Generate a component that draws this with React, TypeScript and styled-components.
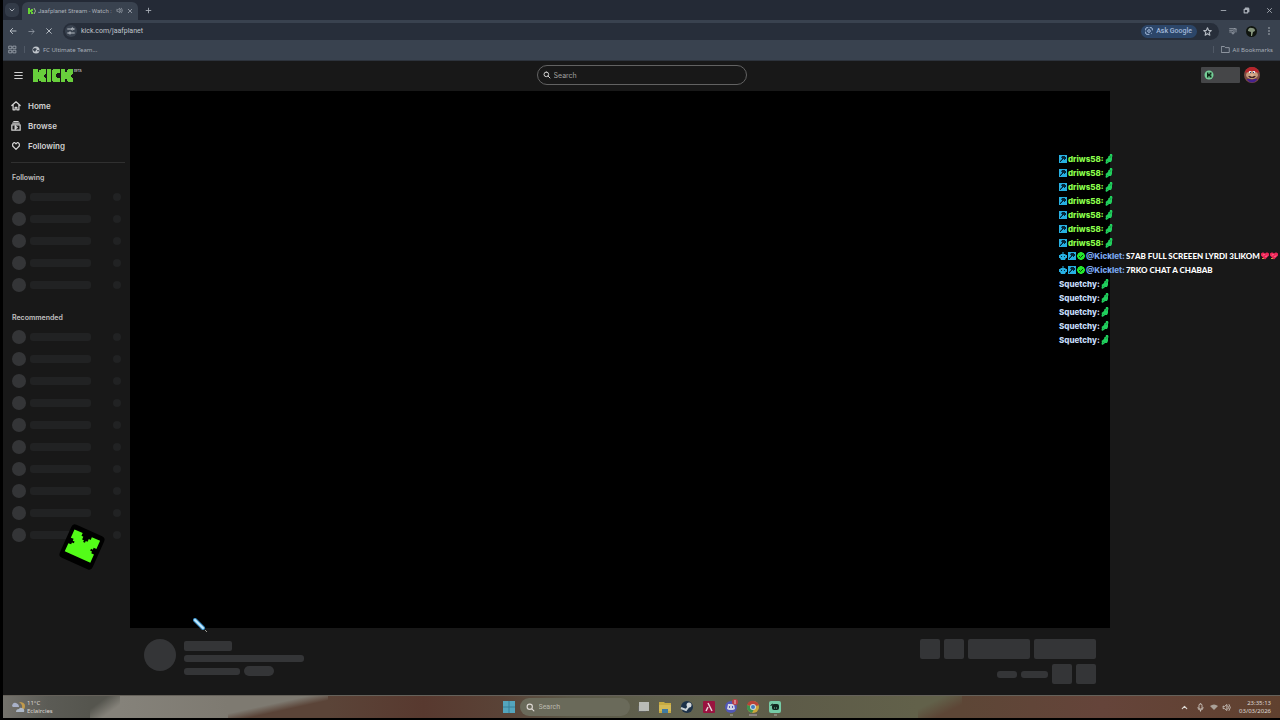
import React from "react";
import styled, { createGlobalStyle } from "styled-components";

const GlobalStyle = createGlobalStyle`
  * { box-sizing: border-box; }
  body { margin: 0; background: #000; font-family: Inter, "Liberation Sans", sans-serif; }
  button, input { font: inherit; border: 0; margin: 0; padding: 0; background: none; color: inherit; outline: none; }
  button { display: flex; align-items: center; justify-content: center; }
  a { color: inherit; text-decoration: none; }
  svg { display: block; flex: none; }
`;

const Screen = styled.div`
  position: relative;
  display: flex;
  flex-direction: column;
  min-height: 100vh;
  padding: 0 0 2px 3px;
  overflow: hidden;
  background: #000;
`;

/* ---------- browser ---------- */

const TabStrip = styled.header`
  display: flex;
  align-items: center;
  height: 20px;
  padding: 0 5px 0 2px;
  background: #242a36;
  color: #a9afb8;
`;

const TabSearchButton = styled.button`
  width: 14px;
  height: 14px;
  border-radius: 5px;
  background: #333b48;
`;

const Tab = styled.div`
  display: flex;
  align-items: center;
  gap: 2px;
  align-self: flex-end;
  width: 116px;
  height: 18px;
  margin-left: 3px;
  padding: 0 4px 1px 6px;
  border-radius: 6px 6px 0 0;
  background: #39424f;
  font-size: 6px;
`;

const TabTitle = styled.span`
  flex: 1;
  white-space: nowrap;
  font-family: Roboto, sans-serif;
`;

const IconButton = styled.button<{ $size?: number }>`
  width: ${(p) => p.$size ?? 12}px;
  height: ${(p) => p.$size ?? 12}px;
  flex: none;
`;

const NewTab = styled(IconButton)`
  margin-left: 4px;
`;

const WindowControls = styled.div`
  display: flex;
  gap: 11px;
  margin-left: auto;
`;

const Toolbar = styled.div`
  display: flex;
  align-items: center;
  height: 22px;
  padding: 0 5px 0 4px;
  gap: 6px;
  background: #39424f;
  color: #b4bac2;
`;

const AddressBar = styled.label`
  display: flex;
  flex: 1;
  align-items: center;
  gap: 4px;
  height: 17px;
  margin-left: 2px;
  padding: 0 6px 0 2px;
  border-radius: 9px;
  background: #272e3a;
`;

const SiteInfo = styled.span`
  display: grid;
  place-items: center;
  width: 12px;
  height: 12px;
  border-radius: 6px;
  background: #39424f;
`;

const AddressInput = styled.input`
  flex: 1;
  min-width: 0;
  font-family: Roboto, sans-serif;
  font-size: 7px;
  color: #c0c5cc;
`;

const AskButton = styled.button`
  gap: 3px;
  height: 13px;
  padding: 0 5px 0 4px;
  border-radius: 7px;
  background: #2c4669;
  color: #a3b9da;
  font: 500 7px Roboto, sans-serif;
`;

const ToolbarEnd = styled.div`
  display: flex;
  gap: 6px;
  margin-left: 2px;
`;

const Bookmarks = styled.nav`
  display: flex;
  align-items: center;
  gap: 7px;
  height: 19px;
  padding: 0 7px 3px 4px;
  border-bottom: 1px solid #2d333c;
  background: #39424f;
  color: #a8afb8;
  font: 6px "Noto Sans", sans-serif;
`;

const Bookmark = styled.a`
  display: flex;
  align-items: center;
  gap: 3px;
`;

const Divider = styled.i<{ $push?: boolean }>`
  width: 1px;
  height: 7px;
  margin-left: ${(p) => (p.$push ? "auto" : 0)};
  background: #505966;
`;

/* ---------- site ---------- */

const SiteHeader = styled.header`
  display: grid;
  grid-template-columns: 1fr 210px 1fr;
  align-items: center;
  height: 30px;
  padding-bottom: 2px;
  background: #181818;
  color: #d0d0d0;
`;

const Brand = styled.div`
  display: flex;
  align-items: center;
  gap: 9px;
  padding-left: 9px;
`;

const SearchBox = styled.label`
  display: flex;
  align-items: center;
  gap: 3px;
  height: 20px;
  padding: 0 5px;
  border: 1px solid #626262;
  border-radius: 10px;
`;

const SearchInput = styled.input`
  flex: 1;
  min-width: 0;
  font-size: 7px;
  &::placeholder { color: #a0a0a0; opacity: 1; }
`;

const Account = styled.div`
  display: flex;
  justify-content: flex-end;
  align-items: center;
  gap: 4px;
  padding-right: 20px;
`;

const Wallet = styled.button`
  justify-content: flex-start;
  width: 39px;
  height: 16px;
  padding: 0 3px;
  border-radius: 1px;
  background: #454648;
`;

const Body = styled.div`
  display: flex;
  flex: 1;
  background: #181818;
`;

const Sidebar = styled.aside`
  width: 127px;
  padding: 5px 5px 0 8px;
  color: #d2d2d2;
`;

const NavLink = styled.a`
  display: flex;
  align-items: center;
  gap: 7px;
  height: 20px;
  font-size: 8px;
  font-weight: 600;
`;

const NavGroup = styled.nav`
  padding-bottom: 6px;
  border-bottom: 1px solid #303030;
`;

const SectionTitle = styled.h2`
  margin: 0;
  height: 10px;
  font-size: 7px;
  line-height: 10px;
  font-weight: 600;
  color: #c0c0c0;
`;

const Section = styled.section`
  padding: 10px 0 7px 1px;
  ul { margin: 3px 0 0; padding: 0; list-style: none; }
`;

const ChannelRow = styled.li`
  display: flex;
  align-items: center;
  height: 22px;
`;

const Bone = styled.span<{ $w: number; $h: number; $r?: number; $dim?: boolean }>`
  flex: none;
  width: ${(p) => p.$w}px;
  height: ${(p) => p.$h}px;
  border-radius: ${(p) => p.$r ?? 2}px;
  background: ${(p) => (p.$dim ? "#212223" : "#343537")};
`;

const ChannelName = styled.span`
  width: 61px;
  height: 8px;
  margin: 0 22px 0 4px;
  border-radius: 3px;
  background: #212223;
`;

const Main = styled.main`
  display: flex;
  flex: 1;
  flex-direction: column;
`;

const Player = styled.div`
  flex: 1;
  background: #000;
`;

const Info = styled.div`
  display: flex;
  align-items: flex-start;
  gap: 8px;
  height: 67px;
  padding: 11px 14px;
`;

const Stack = styled.div<{ $gap: number; $end?: boolean }>`
  display: flex;
  flex-direction: column;
  gap: ${(p) => p.$gap}px;
  align-items: ${(p) => (p.$end ? "flex-end" : "flex-start")};
  ${(p) => (p.$end ? "margin-left: auto;" : "padding-top: 2px;")}
`;

const Line = styled.div`
  display: flex;
  align-items: center;
  gap: 4px;
`;

const ChatColumn = styled.aside`
  width: 170px;
`;

/* ---------- overlays ---------- */

const ChatOverlay = styled.ul`
  position: absolute;
  top: 152px;
  left: calc(100% - 221px);
  margin: 0;
  padding: 0;
  list-style: none;
`;

const Message = styled.li`
  display: flex;
  align-items: center;
  gap: 1px;
  height: 14px;
  white-space: nowrap;
  font-size: 8px;
  font-weight: 800;
  color: #fff;
  &:nth-child(7n) { height: 13px; }
`;

const User = styled.span<{ $color: string }>`
  color: ${(p) => p.$color};
`;

const MessageText = styled.span`
  font-family: Lato, sans-serif;
  font-weight: 900;
`;

const Floating = styled.div<{ $x: number; $bottom: number }>`
  position: absolute;
  left: ${(p) => p.$x}px;
  bottom: ${(p) => p.$bottom}px;
`;

/* ---------- taskbar ---------- */

const Taskbar = styled.footer`
  display: grid;
  grid-template-columns: 1fr auto 1fr;
  align-items: center;
  height: 23px;
  padding: 0 9px;
  border-top: 1px solid #65615a;
  background:
    linear-gradient(to bottom right, #55554e 30%, #85827a 70%) 87px 0 / 30px 100% no-repeat,
    linear-gradient(to bottom right, #7e7a71 40%, #5b4438 60%) 225px 0 / 100px 100% no-repeat,
    linear-gradient(to bottom right, #62614a 30%, #5d4636 70%) 915px 0 / 44px 100% no-repeat,
    linear-gradient(90deg, #74726c 0, #5b5b55 45px, #55554e 87px, #55554e 117px, #85827a 117px, #7e7a71 225px, #7e7a71 325px, #5b4438 325px, #58392f 420px, #5a4337 500px, #5c5a49 570px, #62634f 700px, #5d5b48 780px, #62614a 915px, #62614a 958px, #5d4636 959px, #65443a 1100px, #60412f 1277px);
  color: #ded9d4;
  font: 6px "Noto Sans", sans-serif;
`;

const Weather = styled.div`
  display: flex;
  align-items: center;
  gap: 2px;
  line-height: 8px;
`;

const Apps = styled.div`
  display: flex;
  align-items: center;
  gap: 8px;
`;

const AppButton = styled.button`
  width: 14px;
  height: 20px;
`;

const TaskSearch = styled.label`
  display: flex;
  align-items: center;
  gap: 4px;
  width: 110px;
  height: 18px;
  margin: 0 -2px 0 -4px;
  padding: 0 6px;
  border-radius: 9px;
  background: #6a6a5a;
  font: 7px Roboto, sans-serif;
  input { width: 70px; }
  input::placeholder { color: #bab9ae; opacity: 1; }
`;

const Tray = styled.div`
  display: flex;
  justify-content: flex-end;
  align-items: center;
  gap: 4px;
`;

const Clock = styled.time`
  margin-left: 4px;
  text-align: right;
  line-height: 8px;
`;

/* ---------- drawings ---------- */

type LineIconProps = { d: string; size?: number; width?: number };
const LineIcon = ({ d, size = 10, width = 2 }: LineIconProps) => (
  <svg width={size} height={size} viewBox="0 0 24 24" fill="none" stroke="currentColor" strokeWidth={width} strokeLinejoin="round" strokeLinecap="round">
    <path d={d} />
  </svg>
);

const paths = {
  chevronDown: "M6 9l6 6 6-6",
  chevronUp: "M6 15l6-6 6 6",
  close: "M5 5l14 14M19 5L5 19",
  plus: "M12 4v16M4 12h16",
  minus: "M4 12h16",
  restore: "M4 8h12v12H4zM8 4h9a3 3 0 0 1 3 3v9",
  back: "M21 12H4M11 4l-8 8 8 8",
  forward: "M3 12h17M13 4l8 8-8 8",
  tune: "M2 6h9M2 18h3M14 18h8M19 6h3M16 3a3 3 0 1 1 0 6 3 3 0 0 1 0-6M9 15a3 3 0 1 1 0 6 3 3 0 0 1 0-6",
  star: "M12 2l3 7 7 .6-5.400 4.800L18.300 22 12 17.800 5.700 22l1.700-7.600L2 9.600 9 9z",
  music: "M2 5h11M2 10h9M2 15h6M15 17V4l6 2M12 15a3 3 0 1 0 3 3M21 6v9",
  apps: "M3 3h7v7H3zM14 3h7v7h-7zM3 14h7v7H3zM14 14h7v7h-7z",
  folder: "M2 4h7l3 3h10v13H2z",
  menu: "M2 4h20M2 12h20M2 20h20",
  home: "M2 11L12 2l10 9M5 9v12h5v-6h4v6h5V9",
  browse: "M2 9h20v13H2zM4 5h16M7 1h10M10 12l5 3.500-5 3.500z",
  heart: "M12 20L4 12V7l3-3h2l3 3 3-3h2l3 3v5z",
  search: "M10 3a7 7 0 1 1 0 14 7 7 0 0 1 0-14M15 15l6 6",
  lens: "M9 2H6a4 4 0 0 0-4 4v3M15 2h3a4 4 0 0 1 4 4v3M2 15v3a4 4 0 0 0 4 4h6M12 8a4 4 0 1 1 0 8 4 4 0 0 1 0-8M19 19h.1",
  mic: "M12 2a4 4 0 0 1 4 4v6a4 4 0 0 1-8 0V6a4 4 0 0 1 4-4M5 12a7 7 0 0 0 14 0M12 19v3",
  sound: "M3 9v6h4l6 5V4L7 9zM16 8q4 4 0 8M19 4q7 8 0 16",
};

const KickLogo = () => (
  <svg width="49" height="15" viewBox="0 0 49 15" aria-label="Kick beta">
    <g fill="#68cf3c">
      <path d="M0 1h5v3h1V2h2V1h5v5h-1v1h-1v2h1v1h1v4H8v-1H6v-2H5v3H0z" />
      <path d="M14 1h4v13h-4z" />
      <path d="M20 1h7v4h-3v1h-1v3h1v1h3v4h-7v-1h-1V2h1z" />
      <path d="M28 1h4v3h2V2h1V1h5v5h-1v1h-1v2h1v1h1v4h-5v-1h-1v-2h-2v3h-4z" />
    </g>
    <text x="41" y="4" fontSize="3" fontWeight="700" fill="#bbb" fontFamily="Inter">BETA</text>
  </svg>
);

const Favicon = () => (
  <svg width="8" height="8" viewBox="0 0 8 8">
    <path d="M0 1h2v2h1V2h2v2H4v1h1v2H3V5H2v2H0z" fill="#67d335" />
    <path d="M6 1q3 3 0 6" stroke="#9fb393" fill="none" />
  </svg>
);

const Globe = () => (
  <svg width="8" height="8" viewBox="0 0 8 8">
    <circle cx="4" cy="4" r="3.500" fill="#c0c5cb" />
    <path d="M1 3l2-1 2 1-1 1-1 2-2-2zM5 4l2 0-1 2z" fill="#39424f" />
  </svg>
);

const Dots = () => (
  <svg width="4" height="10" viewBox="0 0 4 10" fill="currentColor">
    <circle cx="2" cy="2" r="0.800" /><circle cx="2" cy="5" r="0.800" /><circle cx="2" cy="8" r="0.800" />
  </svg>
);

const ProfileTree = () => (
  <svg width="11" height="11" viewBox="0 0 11 11">
    <circle cx="5.500" cy="5.500" r="5.500" fill="#10150f" />
    <path d="M2 4q1-3 4-2 3 0 3 3l-2 1-1 4H5V6L2 5z" fill="#85947c" />
  </svg>
);

const Coin = () => (
  <svg width="10" height="10" viewBox="0 0 10 10">
    <circle cx="5" cy="5" r="4.500" fill="#75cf98" />
    <path d="M3 2.500h1.500v1.500h1V2.500H7.500v2H6.500v1h1v2H5.500V6h-1v1.500H3z" fill="#102817" />
  </svg>
);

const Avatar = () => (
  <svg width="16" height="16" viewBox="0 0 16 16">
    <circle cx="8" cy="8" r="8" fill="#7d4a42" />
    <path d="M1 5q2-5 7-5t7 5l-2 1H3z" fill="#b6242b" />
    <ellipse cx="8" cy="8" rx="6" ry="4" fill="#c79b7d" />
    <path d="M5 4h2v2H5zM9 4h2v2H9z" fill="#e6e4ed" />
    <path d="M6 5h1v1H6zM9 5h1v1H9z" fill="#28376e" />
    <ellipse cx="8" cy="8" rx="2" ry="1" fill="#dfb294" />
    <path d="M4 9h2l2 1 2-1h2l-2 2H6z" fill="#3e2321" />
    <path d="M3 12h3l2 1 2-1h3v1q-5 5-10 0z" fill="#45218d" />
  </svg>
);

const ModBadge = () => (
  <svg width="8" height="8" viewBox="0 0 8 8">
    <path d="M0 0h8v8H0z" fill="#27b0e2" />
    <path d="M3 1h3v1h1v2H6v1H5V4H4v1H3v1H2v1H1V6l2-2V3H2z" fill="#062638" />
  </svg>
);

const BotBadge = () => (
  <svg width="8" height="8" viewBox="0 0 8 8">
    <path d="M3.500 0h1v2H6l1 1h1v3H7L6 8H2L1 6H0V3h1l1-1h1.500z" fill="#27b0e2" />
    <path d="M2 4h1v1H2zM5 4h1v1H5z" fill="#062638" />
  </svg>
);

const VerifiedBadge = () => (
  <svg width="8" height="8" viewBox="0 0 8 8">
    <path d="M3 0h2l1 1h1v1l1 1v2L7 6v1H6L5 8H3L2 7H1V6L0 5V3l1-1V1h1z" fill="#24e52c" />
    <path d="M2 4l1.500 1.500L6 3" stroke="#0a3b0d" fill="none" />
  </svg>
);

const Leaf = () => (
  <svg width="8" height="10" viewBox="0 0 8 10">
    <path d="M5 0h2l.5 2L7 3v3L6 8 4 8 3 9 1 10 .5 8.500 1 7l-.5-1L3 4l.5-2 1 0z" fill="#20ce5c" />
    <path d="M2 8l1-1M5 4l1-2" stroke="#139543" strokeWidth="0.800" fill="none" />
  </svg>
);

const GiftHeart = () => (
  <svg width="8" height="8" viewBox="0 0 8 8">
    <path d="M4 7.500L0 3.500V1.500L1.500 .5h1L4 1.500 5.500 .5h1L8 1.500v2z" fill="#ec2557" />
    <path d="M2 3.500l1.500-1.500M4.500 5l1.500-1.500" stroke="#ff8e9e" />
    <path d="M1 6h2v1H1z" fill="#cd9d45" />
  </svg>
);

const SpinningKick = () => (
  <svg width="50" height="50" viewBox="0 0 50 50" aria-label="Kick">
    <g transform="rotate(24 25 25)">
      <rect x="7" y="7" width="36" height="36" rx="4" fill="#000" />
      <path d="M11 12h9v3h2v3h2v2h2v-2h2v-3h2v-3h9v9h-3v2h-2v2h2v2h3v9H11v-9h3v-2h2v-2h-2v-2h-3z" fill="#53fc18" />
    </g>
  </svg>
);

const PenCursor = () => (
  <svg width="16" height="16" viewBox="0 0 16 16">
    <path d="M2 2l8 8" stroke="#3c91c9" strokeWidth="4" strokeLinecap="round" />
    <path d="M2 2l8 8" stroke="#c4e9fc" strokeWidth="2" strokeLinecap="round" />
    <path d="M12 12l2 2" stroke="#9a9a93" />
  </svg>
);

const WeatherIcon = () => (
  <svg width="13" height="12" viewBox="0 0 13 12">
    <path d="M7 1q6 4 1 9 5 0 5-5 0-4-6-4" fill="#c19a4c" />
    <path d="M0 5q1-4 4-3 3 1 3 4H1z" fill="#a9b1c8" />
    <path d="M4 11q0-3 3-3 1-2 3-1 3 1 2 4z" fill="#adb8c8" />
  </svg>
);

const appIcons: { name: string; art: React.ReactNode }[] = [
  { name: "Task view", art: <><path d="M2 8h8v6H2z" fill="#62635f" /><path d="M3 4h10v9H3z" fill="#b9bbb6" /></> },
  { name: "Files", art: <><path d="M1 4h5l1 1h6v10H1z" fill="#c6aa42" /><path d="M1 7h12v6H1z" fill="#d3b957" /><path d="M4 11h6v4H4z" fill="#407aa0" /></> },
  { name: "Steam", art: <><circle cx="7" cy="9" r="6" fill="#1c3148" /><path d="M1 10l5 2 3-4" stroke="#c8d0d4" strokeWidth="2" fill="none" /><circle cx="9" cy="7" r="2.500" fill="#d2d7da" /></> },
  { name: "Launcher", art: <><rect x="1" y="3" width="12" height="12" rx="1" fill="#99133f" /><path d="M4 13l2-4M6 5l4 8" stroke="#ead5dc" strokeWidth="1.500" /></> },
  { name: "Discord", art: <><circle cx="7" cy="9" r="6" fill="#5157b5" /><path d="M4 6h6l1 5-2 1H5l-2-1z" fill="#d0d3e5" /><path d="M5 8h1v2H5zM8 8h1v2H8z" fill="#5157b5" /><circle cx="11" cy="4" r="3" fill="#bd3e48" /><path d="M11 2v4" stroke="#e6c9c9" /><path d="M6 17h3" stroke="#aaa8a0" /></> },
  { name: "Chrome", art: <><circle cx="7" cy="9" r="6" fill="#c9a73a" /><path d="M7 9L1 7q2-5 7-4 4 1 5 4z" fill="#b94339" /><path d="M7 9L1 7q-1 6 5 8l2-4z" fill="#3c914f" /><circle cx="7" cy="9" r="3" fill="#d4dadc" /><circle cx="7" cy="9" r="2" fill="#407cc0" /><path d="M3 17h8" stroke="#b9a7b3" /></> },
  { name: "Streamlabs", art: <><rect x="1" y="3" width="12" height="12" rx="2" fill="#75caa5" /><rect x="4" y="6" width="7" height="6" rx="2" fill="#12261f" /><path d="M3 8V7l2-1" stroke="#12261f" fill="none" /><path d="M6 10h1M8 10h1" stroke="#75caa5" /><path d="M6 17h3" stroke="#aaa8a0" /></> },
];

const Channels = ({ count }: { count: number }) => (
  <ul>
    {Array.from({ length: count }, (_, i) => (
      <ChannelRow key={i}>
        <Bone $w={14} $h={14} $r={7} />
        <ChannelName />
        <Bone $w={8} $h={8} $r={4} $dim />
      </ChannelRow>
    ))}
  </ul>
);

export default function App() {
  return (
    <Screen>
      <GlobalStyle />
      <TabStrip>
        <TabSearchButton aria-label="Search tabs"><LineIcon d={paths.chevronDown} size={8} width={3} /></TabSearchButton>
        <Tab>
          <Favicon />
          <TabTitle>Jaafplanet Stream - Watch :</TabTitle>
          <LineIcon d={paths.sound} size={7} />
          <IconButton $size={9} aria-label="Close tab"><LineIcon d={paths.close} size={6} width={3} /></IconButton>
        </Tab>
        <NewTab aria-label="New tab"><LineIcon d={paths.plus} size={7} width={3} /></NewTab>
        <WindowControls>
          <IconButton aria-label="Minimize"><LineIcon d={paths.minus} size={7} width={3} /></IconButton>
          <IconButton aria-label="Restore"><LineIcon d={paths.restore} size={7} width={4} /></IconButton>
          <IconButton aria-label="Close"><LineIcon d={paths.close} size={7} width={3} /></IconButton>
        </WindowControls>
      </TabStrip>
      <Toolbar>
        <IconButton aria-label="Back"><LineIcon d={paths.back} size={8} width={3} /></IconButton>
        <IconButton aria-label="Forward"><LineIcon d={paths.forward} size={7} /></IconButton>
        <IconButton aria-label="Stop"><LineIcon d={paths.close} size={8} width={3} /></IconButton>
        <AddressBar>
          <SiteInfo><LineIcon d={paths.tune} size={8} width={3} /></SiteInfo>
          <AddressInput aria-label="Address" defaultValue="kick.com/jaafplanet" />
          <AskButton><LineIcon d={paths.lens} size={8} width={3} />Ask Google</AskButton>
          <IconButton aria-label="Bookmark this page"><LineIcon d={paths.star} size={9} width={3} /></IconButton>
        </AddressBar>
        <ToolbarEnd>
          <IconButton aria-label="Media"><LineIcon d={paths.music} size={8} width={2} /></IconButton>
          <IconButton aria-label="Profile"><ProfileTree /></IconButton>
          <IconButton aria-label="Menu"><Dots /></IconButton>
        </ToolbarEnd>
      </Toolbar>
      <Bookmarks>
        <IconButton $size={10} aria-label="Apps"><LineIcon d={paths.apps} size={9} /></IconButton>
        <Divider />
        <Bookmark href="#"><Globe />FC Ultimate Team...</Bookmark>
        <Divider $push />
        <Bookmark href="#"><LineIcon d={paths.folder} size={9} />All Bookmarks</Bookmark>
      </Bookmarks>

      <SiteHeader>
        <Brand>
          <IconButton aria-label="Toggle sidebar"><LineIcon d={paths.menu} size={9} width={3} /></IconButton>
          <KickLogo />
        </Brand>
        <SearchBox>
          <LineIcon d={paths.search} size={8} width={3} />
          <SearchInput aria-label="Search channels" placeholder="Search" />
        </SearchBox>
        <Account>
          <Wallet aria-label="Wallet"><Coin /></Wallet>
          <Avatar />
        </Account>
      </SiteHeader>

      <Body>
        <Sidebar>
          <NavGroup>
            <NavLink href="#"><LineIcon d={paths.home} width={3} />Home</NavLink>
            <NavLink href="#"><LineIcon d={paths.browse} width={3} />Browse</NavLink>
            <NavLink href="#"><LineIcon d={paths.heart} width={3} />Following</NavLink>
          </NavGroup>
          <Section>
            <SectionTitle>Following</SectionTitle>
            <Channels count={5} />
          </Section>
          <Section>
            <SectionTitle>Recommended</SectionTitle>
            <Channels count={10} />
          </Section>
        </Sidebar>
        <Main>
          <Player />
          <Info>
            <Bone $w={32} $h={32} $r={16} />
            <Stack $gap={4}>
              <Bone $w={48} $h={10} />
              <Bone $w={120} $h={7} $r={3} />
              <Line><Bone $w={56} $h={7} $r={3} /><Bone $w={30} $h={10} $r={5} /></Line>
            </Stack>
            <Stack $gap={5} $end>
              <Line>
                <Bone $w={20} $h={20} /><Bone $w={20} $h={20} /><Bone $w={62} $h={20} /><Bone $w={62} $h={20} />
              </Line>
              <Line>
                <Bone $w={20} $h={7} $r={3} /><Bone $w={27} $h={7} $r={3} /><Bone $w={20} $h={20} /><Bone $w={20} $h={20} />
              </Line>
            </Stack>
          </Info>
        </Main>
        <ChatColumn />
      </Body>

      <Taskbar>
        <Weather><WeatherIcon /><div>11°C<br />Eclaircies</div></Weather>
        <Apps>
          <AppButton aria-label="Start">
            <svg width="12" height="12" viewBox="0 0 12 12"><path d="M0 0h12v12H0z" fill="#54a5bd" /><path d="M6 0v12M0 6h12" stroke="#367f98" /></svg>
          </AppButton>
          <TaskSearch><LineIcon d={paths.search} size={9} width={3} /><input aria-label="Search Windows" placeholder="Search" /></TaskSearch>
          {appIcons.map((app) => (
            <AppButton key={app.name} aria-label={app.name}>
              <svg width="14" height="18" viewBox="0 0 14 18">{app.art}</svg>
            </AppButton>
          ))}
        </Apps>
        <Tray>
          <IconButton aria-label="Hidden icons"><LineIcon d={paths.chevronUp} size={9} width={3} /></IconButton>
          <IconButton aria-label="Microphone"><LineIcon d={paths.mic} size={9} /></IconButton>
          <svg width="8" height="8" viewBox="0 0 8 8"><path d="M0 3q4-3 8 0L4 7z" fill="#aaa198" /></svg>
          <LineIcon d={paths.sound} size={9} />
          <Clock>23:35:13<br />03/03/2026</Clock>
        </Tray>
      </Taskbar>

      <ChatOverlay>
        {Array.from({ length: 7 }, (_, i) => (
          <Message key={i}><ModBadge /><User $color="#8cff4d">driws58:</User><Leaf /></Message>
        ))}
        <Message><BotBadge /><ModBadge /><VerifiedBadge /><User $color="#7aa7ed">@Kicklet:</User><MessageText>S7AB FULL SCREEEN LYRDI 3LIKOM</MessageText><GiftHeart /><GiftHeart /></Message>
        <Message><BotBadge /><ModBadge /><VerifiedBadge /><User $color="#7aa7ed">@Kicklet:</User><MessageText>7RKO CHAT A CHABAB</MessageText></Message>
        {Array.from({ length: 5 }, (_, i) => (
          <Message key={i}><User $color="#c5dcf8">Squetchy:</User><Leaf /></Message>
        ))}
      </ChatOverlay>
      <Floating $x={57} $bottom={148}><SpinningKick /></Floating>
      <Floating $x={193} $bottom={86}><PenCursor /></Floating>
    </Screen>
  );
}
